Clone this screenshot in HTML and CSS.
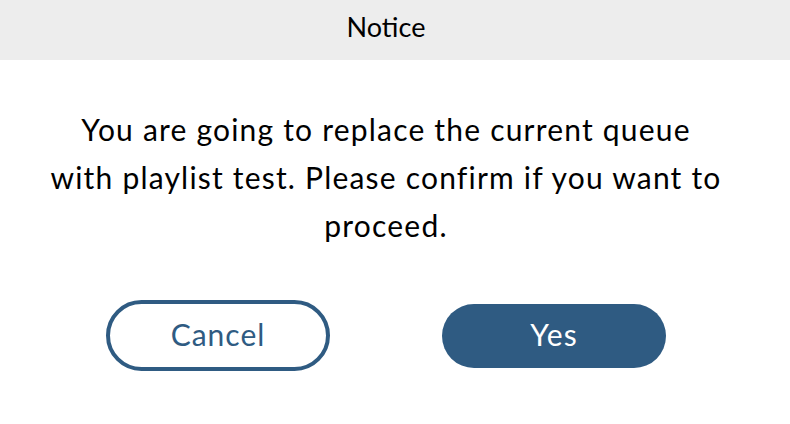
FILE: index.html
```html
<!DOCTYPE html>
<html lang="en">
<head>
  <meta charset="UTF-8" />
  <meta name="viewport" content="width=device-width, initial-scale=1.0"/>
  <title>Notice</title>
  <link rel="stylesheet" href="styles.css">
</head>
<body>
  <div class="dialog">
    <div class="dialog-header">Notice</div>
    <div class="dialog-body">
      <p class="dialog-message">You are going to replace the current queue<br>with playlist test. Please confirm if you want to proceed.</p>
      <div class="dialog-actions">
        <button class="btn btn-outline">Cancel</button>
        <button class="btn btn-solid">Yes</button>
      </div>
    </div>
  </div>
</body>
</html>
```

FILE: styles.css
```css
* {
  margin: 0;
  padding: 0;
  box-sizing: border-box;
  font-family: 'Lato', 'Noto Sans', sans-serif;
}

body {
  background: #fff;
  color: #000;
}

.dialog-header {
  height: 60px;
  padding-right: 18px;
  background: #ededed;
  font-size: 27px;
  line-height: 53px;
  text-align: center;
}

.dialog-body {
  padding-right: 18px;
}

.dialog-message {
  margin: 45px auto 0;
  width: 690px;
  font-size: 30px;
  letter-spacing: 1.2px;
  line-height: 48px;
  text-align: center;
}

.dialog-actions {
  display: flex;
  justify-content: center;
  align-items: center;
  gap: 112px;
  margin-top: 51px;
}

.btn {
  display: flex;
  align-items: center;
  justify-content: center;
  width: 224px;
  padding-bottom: 4px;
  border-radius: 36px;
  font-size: 30px;
  letter-spacing: 1px;
  cursor: pointer;
}

.btn-outline {
  height: 71px;
  background: #fff;
  color: #2f5b82;
  border: 4px solid #2f5b82;
}

.btn-solid {
  height: 64px;
  background: #2f5b82;
  color: #fff;
  border: none;
}
```
